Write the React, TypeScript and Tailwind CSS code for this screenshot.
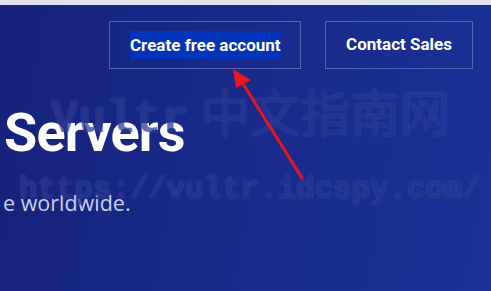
import React from "react";

export default function App() {
  return (
    <div className="relative w-[491px] h-[291px] overflow-hidden bg-[linear-gradient(100deg,#16227b_0%,#192b8c_55%,#1b3197_100%)] font-['Roboto',sans-serif]">
      <div className="h-[5px] bg-[#e0e3ee]" />
      <div className="flex justify-end gap-[24px] pr-[18px] pt-[16px]">
        <button className="h-[48px] w-[192px] border border-[#5565b0] flex items-center pl-[20px]">
          <span className="bg-[#0434b9] text-white font-bold text-[17px] leading-[28px] whitespace-nowrap">
            Create free account
          </span>
        </button>
        <button className="h-[48px] w-[148px] border border-[#5565b0] flex items-center justify-center">
          <span className="text-white font-bold text-[17px] whitespace-nowrap">Contact Sales</span>
        </button>
      </div>
      <div className="pl-[4px] pt-[34px]">
        <h1 className="text-white font-bold text-[54px] leading-[60px] tracking-[-0.8px]">Servers</h1>
        <p className="mt-[26px] -ml-[1px] text-[#c9d1f2] text-[21.5px] leading-[28px] font-['Open_Sans',sans-serif]">
          e worldwide.
        </p>
      </div>

      {/* watermark */}
      <div className="absolute left-[51px] top-[80px] whitespace-nowrap text-[50px] leading-[60px] text-[#13207a]/60 [text-shadow:0_0_2px_rgba(160,180,255,0.35)] font-['Liberation_Mono','Noto_Sans_CJK_SC',monospace] font-bold pointer-events-none">
        <span className="tracking-[0px] text-[46px]">Vultr</span>
        <span className="font-['Noto_Sans_CJK_SC',sans-serif] font-normal"> 中文指南网</span>
      </div>
      <div className="absolute left-[19px] top-[172px] whitespace-nowrap text-[30.8px] leading-[36px] text-[#13207a]/60 [text-shadow:0_0_2px_rgba(160,180,255,0.35)] font-['Liberation_Mono',monospace] font-bold pointer-events-none">
        https://vultr.idcspy.com/
      </div>

      {/* arrow */}
      <svg className="absolute left-0 top-0 pointer-events-none" width="491" height="291" viewBox="0 0 491 291">
        <line x1="302" y1="178" x2="242" y2="82" stroke="#e8161d" strokeWidth="3" strokeLinecap="round" />
        <polygon points="233,69 236,88 251,80" fill="#e8161d" />
      </svg>
    </div>
  );
}
